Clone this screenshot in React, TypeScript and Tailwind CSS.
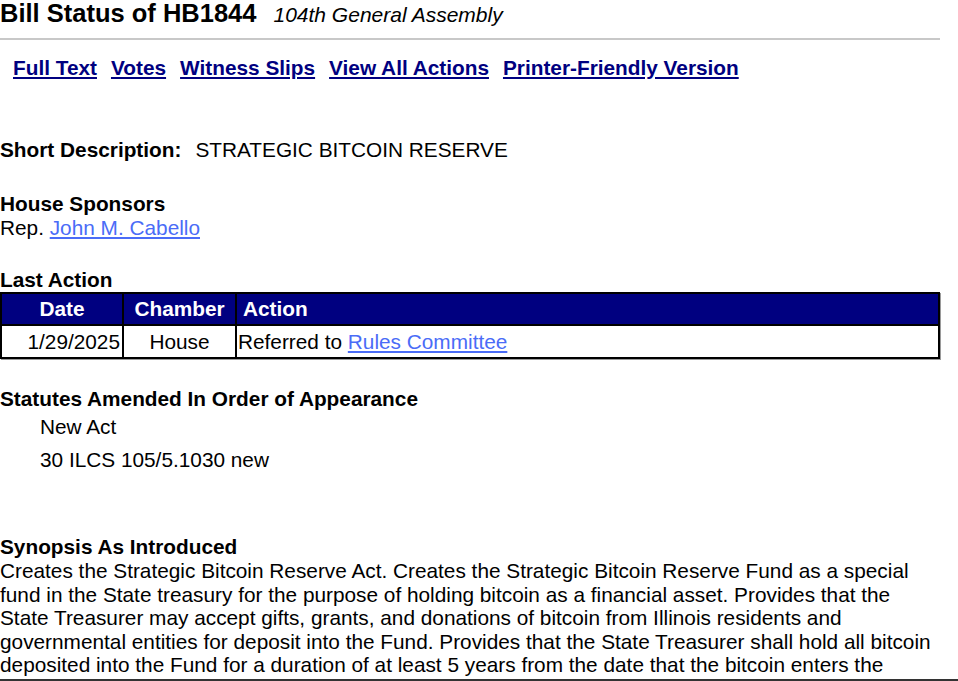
import React from "react";

const links = ["Full Text", "Votes", "Witness Slips", "View All Actions", "Printer-Friendly Version"];

const synopsis = [
  "Creates the Strategic Bitcoin Reserve Act. Creates the Strategic Bitcoin Reserve Fund as a special",
  "fund in the State treasury for the purpose of holding bitcoin as a financial asset. Provides that the",
  "State Treasurer may accept gifts, grants, and donations of bitcoin from Illinois residents and",
  "governmental entities for deposit into the Fund. Provides that the State Treasurer shall hold all bitcoin",
  "deposited into the Fund for a duration of at least 5 years from the date that the bitcoin enters the",
];

export default function App() {
  return (
    <div className="h-[681px] overflow-hidden bg-white border-b-2 border-[#333] text-black font-['Liberation_Sans',Arial,sans-serif] text-[20.8px] leading-[24px]">
      <div className="w-[940px]">
        {/* Title */}
        <div className="flex items-baseline gap-[17px] h-[24px] pt-[1px]">
          <span className="text-[25.5px] font-bold leading-[24px]">Bill Status of HB1844</span>
          <span className="text-[21px] italic leading-[24px]">104th General Assembly</span>
        </div>
        <div className="mt-[14px] h-[2px] bg-[#c8c8c8]"></div>

        {/* Links */}
        <div className="mt-[16px] pl-[13px] flex gap-[14px] font-bold">
          {links.map((l) => (
            <a key={l} href="#" className="text-[#000080] underline underline-offset-2">
              {l}
            </a>
          ))}
        </div>

        {/* Short description */}
        <div className="mt-[58px]">
          <span className="font-bold">Short Description:</span>
          <span className="ml-[14px]">STRATEGIC BITCOIN RESERVE</span>
        </div>

        {/* Sponsors */}
        <div className="mt-[30px] font-bold">House Sponsors</div>
        <div>
          Rep.{" "}
          <a href="#" className="text-[#4a6cf7] underline underline-offset-2">
            John M. Cabello
          </a>
        </div>

        {/* Last action */}
        <div className="mt-[28px] font-bold">Last Action</div>
        <table className="w-full border-collapse border-2 border-black shadow-[1px_1px_0_#9a9a9a]">
          <thead>
            <tr className="bg-[#000080] text-white h-[32px]">
              <th className="border-2 border-black w-[122px] text-center font-bold">Date</th>
              <th className="border-2 border-black w-[113px] text-center font-bold">Chamber</th>
              <th className="border-2 border-black text-left pl-[6px] font-bold">Action</th>
            </tr>
          </thead>
          <tbody>
            <tr className="h-[33px]">
              <td className="border-2 border-black text-right pr-[2px]">1/29/2025</td>
              <td className="border-2 border-black text-center">House</td>
              <td className="border-2 border-black pl-[1px]">
                Referred to{" "}
                <a href="#" className="text-[#4a6cf7] underline underline-offset-2">
                  Rules Committee
                </a>
              </td>
            </tr>
          </tbody>
        </table>

        {/* Statutes */}
        <div className="mt-[28px] font-bold">Statutes Amended In Order of Appearance</div>
        <div className="pl-[40px] mt-[4px]">New Act</div>
        <div className="pl-[40px] mt-[9px]">30 ILCS 105/5.1030 new</div>

        {/* Synopsis */}
        <div className="mt-[63px] font-bold">Synopsis As Introduced</div>
        <div className="leading-[23.6px]">
          {synopsis.map((line) => (
            <div key={line} className="whitespace-nowrap">
              {line}
            </div>
          ))}
        </div>
      </div>
    </div>
  );
}
